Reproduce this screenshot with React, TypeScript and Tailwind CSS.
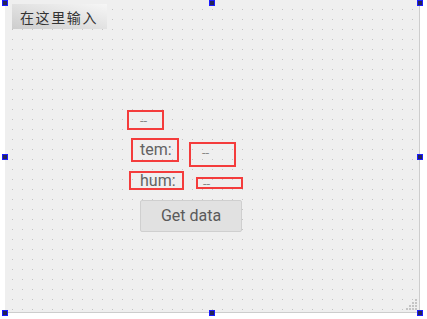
import React from "react";

function Handle({ x, y }: { x: number; y: number }) {
  return (
    <div
      className="absolute w-[6px] h-[6px] border border-[#1a1aff] bg-[#23235a]"
      style={{ left: x - 3, top: y - 3 }}
    />
  );
}

export default function App() {
  const handles = [
    [5, 3],
    [212, 3],
    [420, 3],
    [5, 157],
    [420, 157],
    [5, 313],
    [212, 313],
    [420, 313],
  ];
  return (
    <div className="relative w-[427px] h-[319px] bg-white overflow-hidden font-['Roboto',sans-serif]">
      <div className="absolute left-[5px] top-0 w-[415px] h-[313px] bg-[#efefef] border-r border-b border-[#cdcdcd] bg-[image:radial-gradient(circle_at_7.5px_9.5px,#c2c2c2_0.6px,transparent_0.8px)] bg-[size:10px_10px]">
        {/* Chinese label */}
        <div className="absolute left-[7px] top-[4px] w-[95px] h-[25px] flex items-center pl-[8px] bg-[linear-gradient(to_top_right,#cdcdcd,#f6f6f6)] text-[14px] tracking-[1.6px] text-[#333] font-['Noto_Sans_CJK_SC',serif] leading-none">
          在这里输入
        </div>

        {/* -- label */}
        <div className="absolute left-[122px] top-[110px] w-[37px] h-[20px] border-2 border-[#f43c3c] flex items-center pl-[11px] text-[13px] text-[#888] leading-none">
          --
        </div>

        {/* tem: */}
        <div className="absolute left-[126px] top-[138px] w-[48px] h-[24px] border-2 border-[#f43c3c] flex items-center pl-[7px] text-[16px] text-[#626262] leading-none">
          tem:
        </div>
        <div className="absolute left-[184px] top-[142px] w-[47px] h-[25px] border-2 border-[#f43c3c] flex items-start pt-[2px] pl-[11px] text-[13px] text-[#888] leading-none">
          --
        </div>

        {/* hum: */}
        <div className="absolute left-[124px] top-[171px] w-[55px] h-[19px] border-2 border-[#f43c3c] flex items-center pl-[9px] text-[16px] text-[#626262] leading-none">
          hum:
        </div>
        <div className="absolute left-[191px] top-[177px] w-[47px] h-[12px] border-2 border-[#f43c3c] flex items-center pl-[5px] text-[13px] text-[#888] leading-none">
          --
        </div>

        {/* button */}
        <div className="absolute left-[135px] top-[200px] w-[102px] h-[32px] bg-[#e1e1e1] border border-[#cfcfcf] rounded-[2px] flex items-center justify-center text-[16px] text-[#5a5a5a] leading-none">
          Get data
        </div>

        {/* size grip */}
        <div className="absolute right-[2px] bottom-[2px] grid grid-cols-4 gap-[1px]">
          {[0, 0, 0, 1, 0, 0, 1, 1, 0, 1, 1, 1, 1, 1, 1, 1].map((v, i) => (
            <div key={i} className={v ? "w-[2px] h-[2px] bg-[#c4c4c4]" : "w-[2px] h-[2px]"} />
          ))}
        </div>
      </div>
      {handles.map(([x, y], i) => (
        <Handle key={i} x={x} y={y} />
      ))}
    </div>
  );
}
